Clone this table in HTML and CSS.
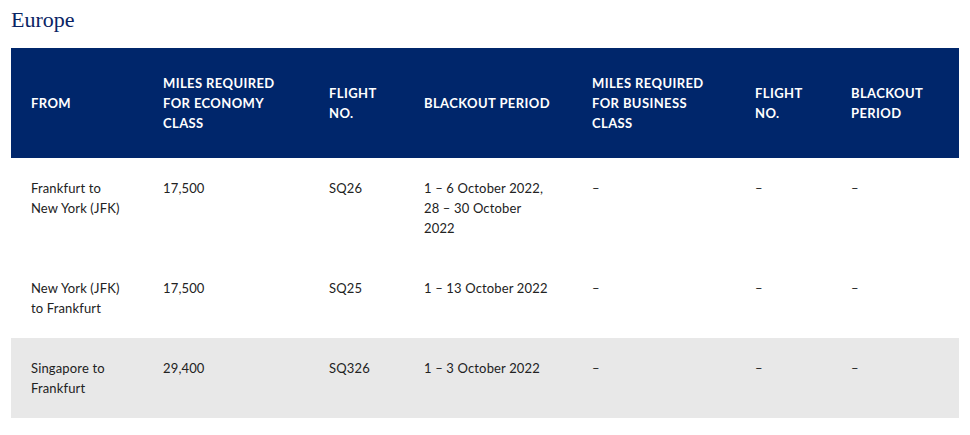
FILE: index.html
```html
<!DOCTYPE html>
<html lang="en">
<head>
<meta charset="utf-8">
<title>Europe</title>
<link rel="stylesheet" href="styles.css">
</head>
<body>
<main class="page">
  <h2 class="region-title">Europe</h2>
  <table class="fares">
    <colgroup>
      <col class="c1"><col class="c2"><col class="c3"><col class="c4"><col class="c5"><col class="c6"><col class="c7">
    </colgroup>
    <thead>
      <tr>
        <th>FROM</th>
        <th>MILES REQUIRED FOR ECONOMY CLASS</th>
        <th>FLIGHT NO.</th>
        <th>BLACKOUT PERIOD</th>
        <th>MILES REQUIRED FOR BUSINESS CLASS</th>
        <th>FLIGHT NO.</th>
        <th>BLACKOUT PERIOD</th>
      </tr>
    </thead>
    <tbody>
      <tr>
        <td>Frankfurt to New York (JFK)</td>
        <td>17,500</td>
        <td>SQ26</td>
        <td>1 – 6 October 2022, 28 – 30 October 2022</td>
        <td>–</td>
        <td>–</td>
        <td>–</td>
      </tr>
      <tr>
        <td>New York (JFK) to Frankfurt</td>
        <td>17,500</td>
        <td>SQ25</td>
        <td>1 – 13 October 2022</td>
        <td>–</td>
        <td>–</td>
        <td>–</td>
      </tr>
      <tr class="shaded">
        <td>Singapore to Frankfurt</td>
        <td>29,400</td>
        <td>SQ326</td>
        <td>1 – 3 October 2022</td>
        <td>–</td>
        <td>–</td>
        <td>–</td>
      </tr>
    </tbody>
  </table>
</main>
</body>
</html>
```

FILE: styles.css
```css
html, body {
  margin: 0;
  padding: 0;
  background: #ffffff;
}

.page {
  padding: 6px 11px 0 11px;
  font-family: Lato, "Liberation Sans", sans-serif;
}

.region-title {
  margin: 0 0 14px 0;
  font-family: "Liberation Serif", serif;
  font-weight: normal;
  font-size: 22px;
  line-height: 28px;
  color: #0a2464;
}

.fares {
  width: 948px;
  border-collapse: collapse;
  table-layout: fixed;
}

.c1 { width: 132px; }
.c2 { width: 166px; }
.c3 { width: 95px; }
.c4 { width: 168px; }
.c5 { width: 163px; }
.c6 { width: 96px; }
.c7 { width: 128px; }

.fares th {
  background: #00266b;
  color: #ffffff;
  font-weight: 700;
  font-size: 13px;
  letter-spacing: 0.4px;
  line-height: 20px;
  text-align: left;
  vertical-align: middle;
  padding: 25px 20px;
  height: 60px;
}

.fares td {
  color: #222222;
  font-size: 13px;
  letter-spacing: 0.15px;
  line-height: 20px;
  vertical-align: top;
  padding: 20px 20px;
}

.fares .shaded td {
  background: #e8e8e8;
}
```
